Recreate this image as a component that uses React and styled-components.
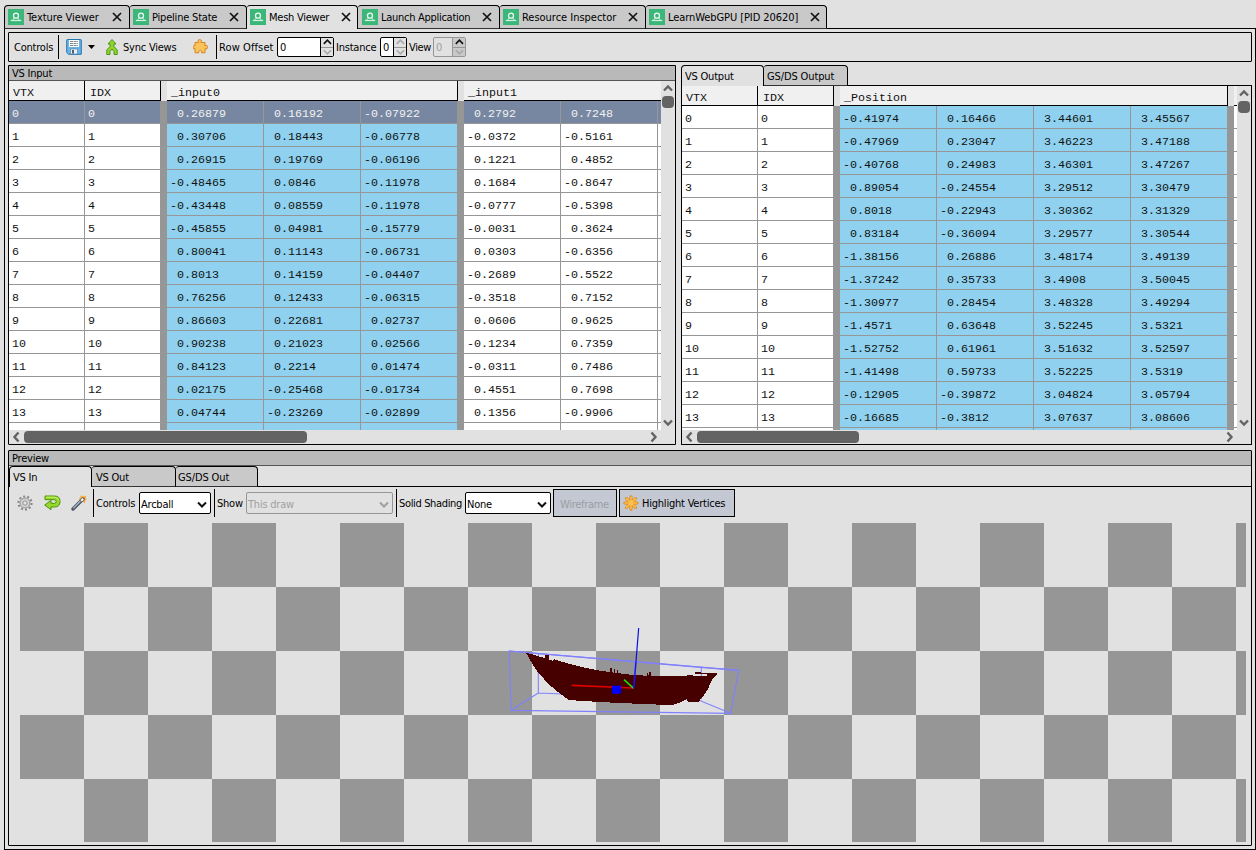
import React from "react";
import styled, { createGlobalStyle, css } from "styled-components";

const Global = createGlobalStyle`
  * { box-sizing: border-box; }
  html, body { margin: 0; padding: 0; background: #e1e1e1; }
  body { width: 1256px; height: 850px; overflow: hidden; color: #000;
    font: 11px/14px "DejaVu Sans Condensed", "DejaVu Sans", sans-serif; font-stretch: condensed; }
`;

const Window = styled.div`
  display: flex; flex-direction: column;
  width: 1256px; height: 850px; padding: 5px 0 0 4px;
`;

const Text = styled.span`
  display: block; flex: none; white-space: pre; overflow: visible; padding-top: 2px;
  width: ${p => (p.$w ? p.$w + "px" : "auto")};
  letter-spacing: ${p => p.$ls ?? -0.22}px;
`;

/* ---- tabs ---- */
const TabStrip = styled.div`
  display: flex; flex: none; height: ${p => p.$h}px;
  &::after { content: ""; flex: 1; border-bottom: 1px solid #000; }
`;
const Tab = styled.div`
  display: flex; align-items: center; flex: none;
  width: ${p => p.$w}px; padding: 0 ${p => p.$right || 0}px ${p => (p.$active ? 1 : 0)}px ${p => p.$left}px;
  border: 1px solid #000; border-left-width: ${p => (p.$first ? 1 : 0)}px;
  border-radius: ${p => (p.$first ? "4px" : "3px")} 4px 0 0;
  background: ${p => (p.$active ? "#e1e1e1" : "#c9c9c9")};
  border-bottom: ${p => (p.$active ? "0" : "1px solid #333")};
`;
const LogoBox = styled.svg`display: block; flex: none; width: 16px; height: 16px; margin-right: 3px;`;
const CloseIcon = styled.svg`display: block; flex: none; width: 10px; height: 10px; margin-left: auto;`;

const Logo = () => (
  <LogoBox viewBox="0 0 16 16">
    <rect width="16" height="16" fill="#3bb779" />
    <path d="M2.800 11.500h10.400" stroke="#d5f0e2" strokeWidth="1.200" fill="none" />
    <path d="M3.500 11.300c1.500-.2 2.300-1 2.500-2.300M12.500 11.300c-1.500-.2-2.300-1-2.500-2.300" fill="none" stroke="#d5f0e2" strokeWidth="1" />
    <circle cx="8" cy="6.700" r="2.500" fill="none" stroke="#effaf4" strokeWidth="1.300" />
  </LogoBox>
);
const Close = () => (
  <CloseIcon viewBox="0 0 10 10"><path d="M1 1l8 8M9 1l-8 8" stroke="#111" strokeWidth="1.700" /></CloseIcon>
);

/* ---- frame ---- */
const Frame = styled.div`
  display: flex; flex-direction: column; flex: 1; min-height: 0;
  border: 1px solid #000; border-top: 0; padding: 3px;
`;
const Bar = styled.div`
  display: flex; align-items: center; flex: none; height: 30px;
  border: 1px solid #000; border-radius: 1px; padding-left: 5px;
`;
const Separator = styled.div`
  flex: none; width: 1px; height: ${p => p.$h}px; background: #000; margin-right: ${p => p.$r || 0}px;
`;
const Icon = styled.svg`
  display: block; flex: none; width: ${p => p.$w || 16}px; height: ${p => p.$h || 16}px;
  margin-right: ${p => p.$r || 0}px;
`;
const Spin = styled.div`
  display: flex; flex: none; width: ${p => p.$w}px; height: 20px; margin-right: ${p => p.$r}px;
  border: 1px solid ${p => (p.$off ? "#969696" : "#000")}; border-radius: 2px;
  background: ${p => (p.$off ? "#e1e1e1" : "#fff")};
  color: ${p => (p.$off ? "#a0a0a0" : "#000")};
  line-height: 20px; padding-left: 2px;
`;
const SpinButtons = styled.div`
  display: grid; grid-template-rows: 1fr 1fr; width: 13px; height: 18px; margin-left: auto;
  border-left: 1px solid ${p => (p.$off ? "#969696" : "#000")};
  background: ${p => (p.$off ? "#c9c9c9" : "#e1e1e1")};
`;
const SpinHalf = styled.div`
  display: grid; place-items: center; min-height: 0;
  & + & { border-top: 1px solid #969696; }
`;

const arrows = {
  up: "M2 6.500L6 2.500l4 4", down: "M2 2.500l4 4 4-4",
  left: "M6.500 1.500L2.500 6l4 4.500", right: "M2.500 1.500l4 4.500-4 4.500",
};
const Chevron = ({ dir, color = "#636363", width = 2, size = 1 }) => {
  const vertical = dir === "up" || dir === "down";
  return (
    <Icon $w={(vertical ? 12 : 9) * size} $h={(vertical ? 9 : 12) * size} viewBox={vertical ? "0 0 12 9" : "0 0 9 12"}>
      <path d={arrows[dir]} fill="none" stroke={color} strokeWidth={width} />
    </Icon>
  );
};
const SpinBox = ({ w, r, off, upOff }) => (
  <Spin $w={w} $r={r} $off={off}>
    0
    <SpinButtons $off={off}>
      <SpinHalf><Chevron dir="up" size={0.9} width={1.8} color={upOff ? "#a8a8a8" : "#111"} /></SpinHalf>
      <SpinHalf><Chevron dir="down" size={0.9} width={1.8} color="#a8a8a8" /></SpinHalf>
    </SpinButtons>
  </Spin>
);

/* ---- tables ---- */
const Split = styled.div`display: flex; flex: none; height: 380px; margin-top: 3px; gap: 5px;`;
const Panel = styled.div`
  display: flex; flex-direction: column; flex: none; width: ${p => p.$w}px; height: 380px;
  ${p => p.$boxed && css`border: 1px solid #000; border-bottom-left-radius: 1px;`}
`;
const Title = styled.div`
  display: flex; align-items: center; flex: none; height: 15px; padding-left: 3px;
  background: #b9b9b9; border-bottom: 1px solid #555;
`;
const Body = styled.div`
  display: flex; flex-direction: column; flex: 1; min-height: 0;
  ${p => p.$sides && css`border: 1px solid #000; border-top: 0; border-radius: 0 0 1px 1px;`}
`;
const Middle = styled.div`display: flex; flex: 1; min-height: 0;`;
const Sheet = styled.div`
  flex: 1; min-width: 0; overflow: hidden; background: #fff;
  font: 11.67px/14px "Liberation Mono", "Courier New", monospace; color: #111;
`;
const Row = styled.div`
  display: flex; height: 23px; width: 1000px;
  color: ${p => (p.$sel ? "#f2f2f2" : "inherit")};
  background: ${p => (p.$sel ? "#7787a1" : "#fff")};
`;
const HeadRow = styled.div`display: flex; height: 20px; width: 1000px; background: #f0f0f0;`;
const Cell = styled.div`
  flex: none; width: ${p => p.$w}px; height: 23px; padding: 6px 0 0 3px; white-space: pre;
  border-bottom: 1px solid #969696; border-right: ${p => (p.$last ? 0 : 1)}px solid #969696;
  background: ${p => (p.$blue ? "#8fd1ef" : "transparent")};
`;
const HeadCell = styled.div`
  flex: none; width: ${p => p.$w}px; height: 20px; padding: 5px 0 0 ${p => p.$left || 4}px;
  border-bottom: 1px solid #000; border-right: ${p => (p.$open ? 0 : 1)}px solid #000;
`;
const Divider = styled.div`
  flex: none; width: ${p => (p.$head ? 6 : 7)}px; background: ${p => (p.$head ? "#e1e1e1" : "#969696")};
`;
const VScroll = styled.div`
  display: flex; flex-direction: column; align-items: center; flex: none; width: 14px; padding: 3px 0 3px;
  & > :last-child { margin-top: auto; margin-right: 0; }
`;
const VThumb = styled.div`width: 12px; height: 12px; margin-top: 3px; border-radius: 4px; background: #636363;`;
const HScroll = styled.div`
  display: flex; align-items: center; flex: none; height: 14px; padding: 0 17px 0 3px;
  & > :last-child { margin-left: auto; }
`;
const HThumb = styled.div`
  width: ${p => p.$w}px; height: 12px; margin-left: 3px; border-radius: 4px; background: #636363;
`;

const num = s => (s.startsWith("-") ? s : " " + s);
const inputRows = `0.26879 0.16192 -0.07922 0.2792 0.7248
0.30706 0.18443 -0.06778 -0.0372 -0.5161
0.26915 0.19769 -0.06196 0.1221 0.4852
-0.48465 0.0846 -0.11978 0.1684 -0.8647
-0.43448 0.08559 -0.11978 -0.0777 -0.5398
-0.45855 0.04981 -0.15779 -0.0031 0.3624
0.80041 0.11143 -0.06731 0.0303 -0.6356
0.8013 0.14159 -0.04407 -0.2689 -0.5522
0.76256 0.12433 -0.06315 -0.3518 0.7152
0.86603 0.22681 0.02737 0.0606 0.9625
0.90238 0.21023 0.02566 -0.1234 0.7359
0.84123 0.2214 0.01474 -0.0311 0.7486
0.02175 -0.25468 -0.01734 0.4551 0.7698
0.04744 -0.23269 -0.02899 0.1356 -0.9906`.split("\n").map(l => l.split(" "));
const outputRows = `-0.41974 0.16466 3.44601 3.45567
-0.47969 0.23047 3.46223 3.47188
-0.40768 0.24983 3.46301 3.47267
0.89054 -0.24554 3.29512 3.30479
0.8018 -0.22943 3.30362 3.31329
0.83184 -0.36094 3.29577 3.30544
-1.38156 0.26886 3.48174 3.49139
-1.37242 0.35733 3.4908 3.50045
-1.30977 0.28454 3.48328 3.49294
-1.4571 0.63648 3.52245 3.5321
-1.52752 0.61961 3.51632 3.52597
-1.41498 0.59733 3.52225 3.5319
-0.12905 -0.39872 3.04824 3.05794
-0.16685 -0.3812 3.07637 3.08606`.split("\n").map(l => l.split(" "));

const InputTable = () => (
  <Sheet>
    <HeadRow>
      <HeadCell $w={76}>VTX</HeadCell><HeadCell $w={76} $left={5}>IDX</HeadCell><Divider $head />
      <HeadCell $w={291}>_input0</HeadCell><Divider $head />
      <HeadCell $w={300} $open>_input1</HeadCell>
    </HeadRow>
    {[...inputRows, null].map((r, i) => {
      const v = j => (r ? num(r[j]) : "");
      return (
        <Row key={i} $sel={i === 0}>
          <Cell $w={76}>{r ? i : ""}</Cell><Cell $w={75} $last>{r ? i : ""}</Cell><Divider />
          <Cell $w={97} $blue={i > 0}>{v(0)}</Cell><Cell $w={97} $blue={i > 0}>{v(1)}</Cell>
          <Cell $w={96} $blue={i > 0} $last>{v(2)}</Cell><Divider />
          <Cell $w={97}>{v(3)}</Cell><Cell $w={97}>{v(4)}</Cell><Cell $w={97} />
        </Row>
      );
    })}
  </Sheet>
);
const OutputTable = () => (
  <Sheet>
    <HeadRow>
      <HeadCell $w={76}>VTX</HeadCell><HeadCell $w={76} $left={5}>IDX</HeadCell><Divider $head />
      <HeadCell $w={388}>_Position</HeadCell><Divider $head /><HeadCell $w={60} $open />
    </HeadRow>
    {[...outputRows, null].map((r, i) => (
      <Row key={i}>
        <Cell $w={76}>{r ? i : ""}</Cell><Cell $w={75} $last>{r ? i : ""}</Cell><Divider />
        {[0, 1, 2, 3].map(j => (
          <Cell key={j} $w={j === 3 ? 96 : 97} $last={j === 3} $blue>{r ? num(r[j]) : ""}</Cell>
        ))}
        <Divider /><Cell $w={60} />
      </Row>
    ))}
  </Sheet>
);
const Scrolled = ({ children, thumb, sides }) => (
  <Body $sides={sides}>
    <Middle>
      {children}
      <VScroll><Chevron dir="up" width={2.4} /><VThumb /><Chevron dir="down" width={2.4} /></VScroll>
    </Middle>
    <HScroll><Chevron dir="left" width={2.4} /><HThumb $w={thumb} /><Chevron dir="right" width={2.4} /></HScroll>
  </Body>
);

/* ---- preview ---- */
const Preview = styled.div`
  display: flex; flex-direction: column; flex: none; height: 396px; margin-top: 5px;
  border: 1px solid #000; border-radius: 1px;
`;
const Tools = styled.div`display: flex; align-items: center; flex: none; height: 36px; padding: 0 0 4px 8px;`;
const Combo = styled.div`
  display: flex; align-items: center; justify-content: space-between; flex: none;
  width: ${p => p.$w}px; height: 22px; margin-right: ${p => p.$r}px; padding: 2px 2px 0 1px;
  border: 1px solid ${p => (p.$off ? "#969696" : "#000")}; border-radius: 2px;
  background: ${p => (p.$off ? "#e1e1e1" : "#fff")}; color: ${p => (p.$off ? "#a0a0a0" : "#000")};
`;
const ToolButton = styled.div`
  display: flex; align-items: center; flex: none; width: ${p => p.$w}px; height: 28px; gap: 3px;
  margin-right: 2px; padding: ${p => p.$pad}; border: 1px solid #000; background: #c3c8d3;
  color: ${p => (p.$off ? "#9b9ea5" : "#000")};
`;
const Viewport = styled.div`
  position: relative; width: 1226px; height: 319px; margin-left: 11px;
  background: repeating-conic-gradient(#969696 0 25%, #e1e1e1 0 50%) 0 0 / 128px 128px;
`;
const Model = styled.svg`position: absolute; left: 480px; top: 87px; width: 250px; height: 120px;`;

const Ship = () => (
  <Model viewBox="0 0 750 360">
    <g fill="none" stroke="#8080ff" strokeWidth="3.300">
      <path d="M28 123L716 181L692 310L33 301Z" />
      <path d="M28 123L115 131L604 172L716 181M115 131V249L33 301M115 249L590 268L692 310M604 172V268" />
    </g>
    <path shapeRendering="crispEdges" fill="#460000" d="M78 128L97 133L136 145V135H148V149L158 152L164 148L186 155L210 162L250 172L300 182L331 186V175H337V187L341 188V178H345V188L350 189V181H354V189L360 190L400 195L440 197V188H443V194H448V187H452V197L560 198V194H580V197H600L620 197V193H584V187H604V189L650 190L651 195L640 204L633 215L624 237L610 258L596 275L563 275L559 267L545 276L520 284H480L430 282L360 279L300 276L206 270L180 251L150 226L115 189L98 163Z" />
    <path d="M215 226L400 234" stroke="#dc0000" strokeWidth="5" />
    <path d="M372 209L401 235" stroke="#20e000" strokeWidth="4.500" />
    <path d="M401 235L408 155" stroke="#1414ff" strokeWidth="4.500" />
    <path d="M408 155L416 54" stroke="#0a0ae6" strokeWidth="3.500" />
    <rect x="336" y="227" width="27" height="24" fill="#0000ff" />
  </Model>
);

const Save = () => (
  <Icon $r={6} viewBox="0 0 16 16">
    <path d="M.7 1.200q0-.7.7-.7h13.200q.7 0 .7.7v14.100H2.500L.7 13.500z" fill="#6db2e4" stroke="#2079b5" />
    <path d="M3 1h10v7H3z" fill="#fff" /><path d="M4 2.500h8M4 4.500h8M4 6.500h8" stroke="#7c8992" strokeDasharray="3 .6" />
    <path d="M4.500 10h7v5h-7z" fill="#e9eff3" stroke="#3d7ca8" strokeWidth=".6" /><path d="M6 11h2v3.500H6z" fill="#4a6272" />
  </Icon>
);
const Sync = () => (
  <Icon $w={12} $r={5} viewBox="0 0 12 16">
    <path d="M6 .5L10 5H8v2.500l3.200 3.500v4.500H8V12.500L6 10l-2 2.500v3H.8V11L4 7.500V5H2z" fill="#8fd32c" stroke="#3f8d0c" strokeWidth=".9" />
  </Icon>
);
const Puzzle = () => (
  <Icon $w={15} $r={8} viewBox="0 0 15 16">
    <path d="M2 3.500h3.500C4.300 1.500 5.500.6 6.700.6s2.600.9 1.300 2.900h4v3.300c1.800-1.200 2.600.2 2.600 1.400s-.9 2.500-2.600 1.300v4.300H8.400c1-1.600-.2-2.300-1.200-2.300s-2.100.8-1.300 2.300H2V9.600C.2 10.600.3 9.200.3 8.200S.6 6 2 6.900z" fill="#fbc35c" stroke="#d98420" />
  </Icon>
);
const Gear = () => (
  <Icon $r={11} viewBox="0 0 16 16">
    <circle cx="8" cy="8" r="6.600" fill="none" stroke="#888" strokeWidth="2" strokeDasharray="2 2.150" />
    <circle cx="8" cy="8" r="5" fill="#d3d3d3" stroke="#929292" />
    <circle cx="8" cy="8" r="2.200" fill="#e1e1e1" stroke="#929292" />
  </Icon>
);
const Back = () => (
  <Icon $w={17} $r={10} viewBox="0 0 17 16">
    <path d="M1 1h9.500Q16 1 16 6.500T10.500 12H7v2.800L.7 10 7 5.400V8.300h3.300q1.900 0 1.900-1.800t-1.900-1.800H1z" fill="#97d82e" stroke="#4c9508" strokeLinejoin="round" />
    <path d="M2 2.200h8.500q4 0 4.300 3.500" fill="none" stroke="#c9f06e" />
  </Icon>
);
const Wand = () => (
  <Icon $r={6} viewBox="0 0 16 16">
    <path d="M11.800 0l.8 1.800L15.400.8l-1 2.700L16 4.800l-2 .8.300 2.700-2.300-1.300L8.300 6 8 3.500l1.700-.8L9 .6l2 .9z" fill="#ffa62b" />
    <path d="M2 14L12 4" stroke="#4c5664" strokeWidth="3.400" strokeLinecap="round" />
    <path d="M2.300 13.400L9.500 6" stroke="#a9b7c8" strokeWidth="1.300" /><path d="M10.200 5.800L12.200 3.800" stroke="#fff" strokeWidth="2" />
  </Icon>
);
const Asterisk = () => (
  <Icon viewBox="0 0 16 16">
    <path d="M8 1.800v12.400M1.800 8h12.400M3.500 3.500l9 9M12.500 3.500l-9 9" stroke="#d98a1c" strokeWidth="3" strokeLinecap="round" />
    <path d="M8 2v12M2 8h12M3.600 3.600l8.800 8.800M12.400 3.600l-8.800 8.800" stroke="#ffc04d" strokeWidth="1.500" strokeLinecap="round" />
  </Icon>
);

const windowTabs = [
  { name: "Texture Viewer", w: 126, left: 3, ls: -0.07 },
  { name: "Pipeline State", w: 117, left: 3, ls: -0.2 },
  { name: "Mesh Viewer", w: 111, left: 3, right: 6, ls: -0.25, active: true },
  { name: "Launch Application", w: 142, left: 4, ls: -0.28 },
  { name: "Resource Inspector", w: 146, left: 3, ls: -0.02 },
  { name: "LearnWebGPU [PID 20620]", w: 181, left: 3, right: 6, ls: -0.08 },
];

export default function App() {
  return (
    <Window>
      <Global />
      <TabStrip $h={24}>
        {windowTabs.map((t, i) => (
          <Tab key={t.name} $w={t.w} $first={i === 0} $active={t.active} $left={t.left} $right={t.right || 7}>
            <Logo /><Text $ls={t.ls}>{t.name}</Text><Close />
          </Tab>
        ))}
      </TabStrip>
      <Frame>
        <Bar>
          <Text $w={44}>Controls</Text><Separator $h={24} $r={7} />
          <Save />
          <Icon $w={7} $h={4} $r={11} viewBox="0 0 7 4"><path d="M0 0h7L3.500 4z" /></Icon>
          <Sync /><Text $w={70}>Sync Views</Text><Puzzle /><Separator $h={24} $r={2} />
          <Text $w={58} $ls={0.1}>Row Offset</Text><SpinBox w={57} r={2} />
          <Text $w={44}>Instance</Text><SpinBox w={27} r={2} upOff />
          <Text $w={24} $ls={-0.4}>View</Text><SpinBox w={33} r={0} off />
        </Bar>
        <Split>
          <Panel $w={668} $boxed>
            <Title><Text>VS Input</Text></Title>
            <Scrolled thumb={283}><InputTable /></Scrolled>
          </Panel>
          <Panel $w={571}>
            <TabStrip $h={21}>
              <Tab $first $active $w={83} $left={3}><Text>VS Output</Text></Tab>
              <Tab $w={84} $left={3}><Text $ls={-0.12}>GS/DS Output</Text></Tab>
            </TabStrip>
            <Scrolled thumb={162} sides><OutputTable /></Scrolled>
          </Panel>
        </Split>
        <Preview>
          <Title><Text>Preview</Text></Title>
          <TabStrip $h={21}>
            <Tab $first $active $w={83} $left={3}><Text>VS In</Text></Tab>
            <Tab $w={84} $left={4}><Text>VS Out</Text></Tab>
            <Tab $w={82} $left={2}><Text $ls={-0.12}>GS/DS Out</Text></Tab>
          </TabStrip>
          <Tools>
            <Gear /><Back /><Wand />
            <Separator $h={28} $r={2} /><Text $w={43}>Controls</Text>
            <Combo $w={72} $r={3}><Text>Arcball</Text><Chevron dir="down" color="#111" /></Combo>
            <Separator $h={28} $r={2} /><Text $w={29}>Show</Text>
            <Combo $w={147} $r={3} $off><Text>This draw</Text><Chevron dir="down" color="#a0a0a0" /></Combo>
            <Separator $h={28} $r={2} /><Text $w={66} $ls={-0.35}>Solid Shading</Text>
            <Combo $w={86} $r={2}><Text>None</Text><Chevron dir="down" color="#111" /></Combo>
            <ToolButton $w={64} $off $pad="2px 0 0 6px"><Text $ls={-0.3}>Wireframe</Text></ToolButton>
            <ToolButton $w={116} $pad="0 0 0 3px"><Asterisk /><Text>Highlight Vertices</Text></ToolButton>
          </Tools>
          <Viewport><Ship /></Viewport>
        </Preview>
      </Frame>
    </Window>
  );
}
